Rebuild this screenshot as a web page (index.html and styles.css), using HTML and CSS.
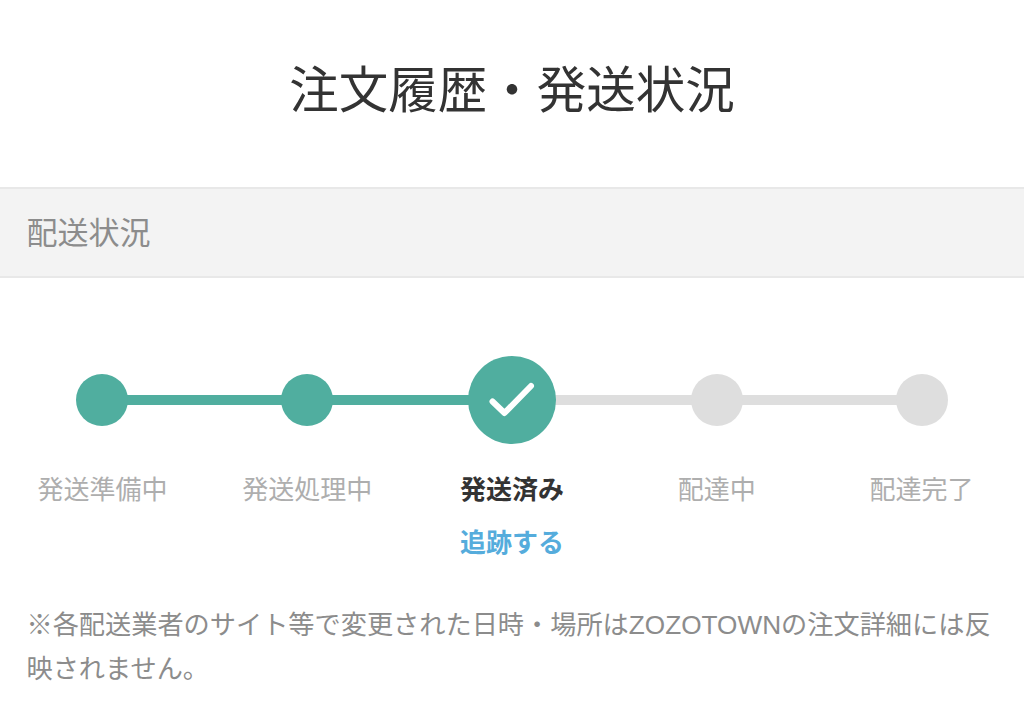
FILE: index.html
```html
<!DOCTYPE html>
<html lang="ja">
<head>
    <meta charset="UTF-8">
    <meta name="viewport" content="width=device-width, initial-scale=1.0">
    <title>注文履歴・発送状況</title>
    <link rel="stylesheet" href="styles.css">
</head>
<body>
    <h1 class="page-title">注文履歴・発送状況</h1>
    <h2 class="section-bar">配送状況</h2>

    <!-- Stepper -->
    <ol class="stepper">
        <li class="step done">
            <div class="dot-row"><span class="dot"></span></div>
            <div class="step-label">発送準備中</div>
        </li>
        <li class="step done">
            <div class="dot-row"><span class="dot"></span></div>
            <div class="step-label">発送処理中</div>
        </li>
        <li class="step current">
            <div class="dot-row">
                <span class="dot">
                    <svg class="check" viewBox="0 0 46 36" width="46" height="36">
                        <path d="M3.5 19.5 L15.5 31 L42 4" fill="none" stroke="#fff" stroke-width="6" stroke-linecap="round" stroke-linejoin="round"/>
                    </svg>
                </span>
            </div>
            <div class="step-label">発送済み</div>
            <a class="track-link" href="#">追跡する</a>
        </li>
        <li class="step">
            <div class="dot-row"><span class="dot"></span></div>
            <div class="step-label">配達中</div>
        </li>
        <li class="step">
            <div class="dot-row"><span class="dot"></span></div>
            <div class="step-label">配達完了</div>
        </li>
    </ol>

    <p class="note">※各配送業者のサイト等で変更された日時・場所はZOZOTOWNの注文詳細には反映されません。</p>
</body>
</html>
```

FILE: styles.css
```css
body {
    margin: 0;
    padding: 0;
    background-color: #fff;
    color: #333;
    font-family: "Liberation Sans", "Noto Sans CJK JP", sans-serif;
}

.page-title {
    margin: 0;
    height: 187px;
    line-height: 181px;
    text-align: center;
    font-size: 49.5px;
    font-weight: 400;
}

.section-bar {
    margin: 0;
    padding: 0 26.5px;
    height: 87px;
    line-height: 89px;
    background-color: #f3f3f3;
    border-top: 2px solid #e8e8e8;
    border-bottom: 2px solid #e8e8e8;
    color: #8c8c8c;
    font-size: 31px;
    font-weight: 400;
}

/* Stepper */
.stepper {
    display: flex;
    margin: 0;
    padding: 78px 0 0;
    list-style: none;
}

.step {
    position: relative;
    flex: 1;
    text-align: center;
}

.step::before {
    content: "";
    position: absolute;
    top: 39px;
    left: 50%;
    width: 100%;
    height: 10px;
    background-color: #dedede;
}

.step:last-child::before {
    display: none;
}

.step.done::before {
    background-color: #50ae9f;
}

.dot-row {
    position: relative;
    display: flex;
    align-items: center;
    justify-content: center;
    height: 88px;
}

.dot {
    display: flex;
    align-items: center;
    justify-content: center;
    width: 52px;
    height: 52px;
    border-radius: 50%;
    background-color: #dedede;
}

.done .dot, .current .dot {
    background-color: #50ae9f;
}

.current .dot {
    width: 88px;
    height: 88px;
}

.step-label {
    margin-top: 27px;
    line-height: 38px;
    font-size: 26px;
    color: #aeaeae;
}

.current .step-label {
    color: #333;
    font-weight: 700;
}

.track-link {
    display: block;
    margin-top: 15px;
    line-height: 38px;
    font-size: 26px;
    font-weight: 700;
    color: #55acdc;
    text-decoration: none;
}

.note {
    margin: 41px 0 0;
    padding: 0 26.5px;
    font-size: 26.2px;
    line-height: 44px;
    color: #8c8c8c;
}
```
